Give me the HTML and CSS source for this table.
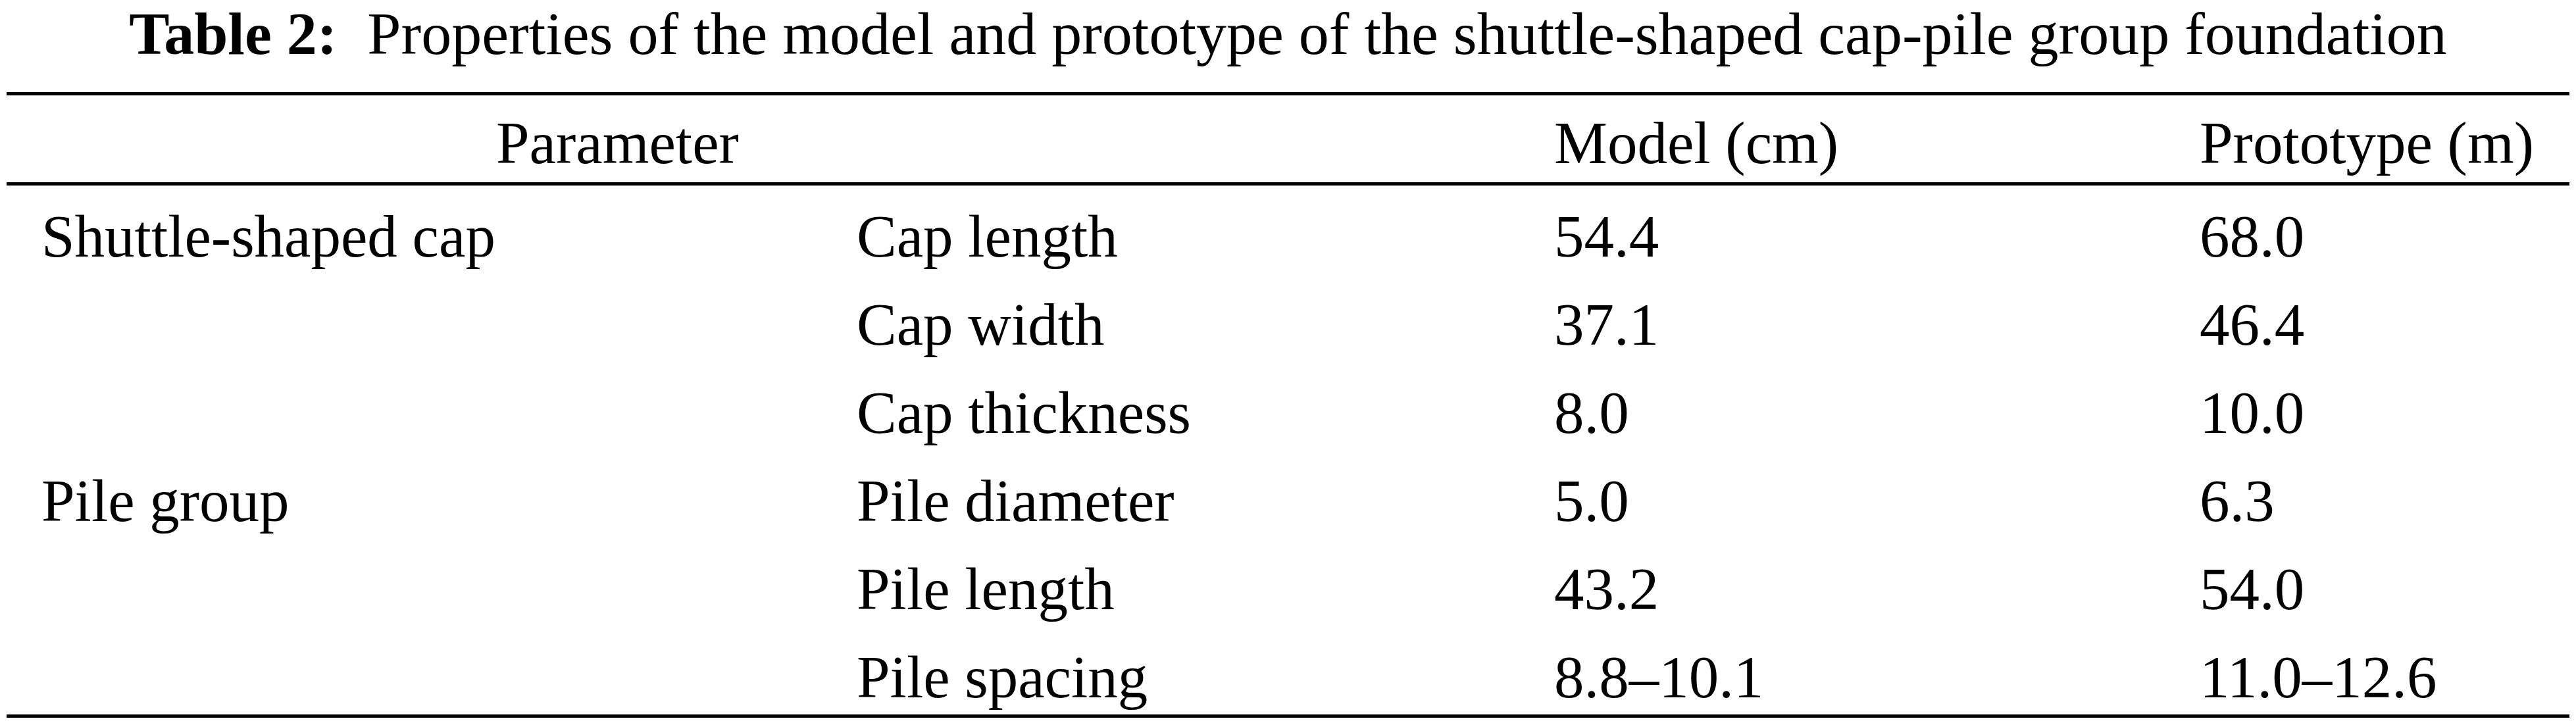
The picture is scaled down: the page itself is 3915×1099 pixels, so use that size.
FILE: index.html
```html
<!DOCTYPE html>
<html lang="en">
<head>
  <meta charset="UTF-8">
  <meta name="viewport" content="width=device-width, initial-scale=1.0">
  <link rel="stylesheet" href="styles.css">
  <title>Table 2</title>
</head>
<body>

  <div class="table-wrap">
    <p class="caption"><span class="caption-label">Table 2:</span>Properties of the model and prototype of the shuttle-shaped cap-pile group foundation</p>

    <table class="props-table">
      <colgroup>
        <col class="col-group">
        <col class="col-item">
        <col class="col-model">
        <col class="col-proto">
      </colgroup>
      <thead>
        <tr>
          <th colspan="2" class="param-head">Parameter</th>
          <th>Model (cm)</th>
          <th>Prototype (m)</th>
        </tr>
      </thead>
      <tbody>
        <tr>
          <td class="group-name">Shuttle-shaped cap</td>
          <td>Cap length</td>
          <td>54.4</td>
          <td>68.0</td>
        </tr>
        <tr>
          <td class="group-name"></td>
          <td>Cap width</td>
          <td>37.1</td>
          <td>46.4</td>
        </tr>
        <tr>
          <td class="group-name"></td>
          <td>Cap thickness</td>
          <td>8.0</td>
          <td>10.0</td>
        </tr>
        <tr>
          <td class="group-name">Pile group</td>
          <td>Pile diameter</td>
          <td>5.0</td>
          <td>6.3</td>
        </tr>
        <tr>
          <td class="group-name"></td>
          <td>Pile length</td>
          <td>43.2</td>
          <td>54.0</td>
        </tr>
        <tr class="last-row">
          <td class="group-name"></td>
          <td>Pile spacing</td>
          <td>8.8&ndash;10.1</td>
          <td>11.0&ndash;12.6</td>
        </tr>
      </tbody>
    </table>
  </div>

</body>
</html>
```

FILE: styles.css
```css
body {
  font-family: "Liberation Serif", "Times New Roman", serif;
  background-color: #ffffff;
  color: #000000;
  margin: 0;
  padding: 0;
}

.table-wrap {
  padding: 0 10px;
}

.caption {
  margin: 0 0 38px 0;
  font-size: 92px;
  line-height: 102px;
  text-align: center;
  white-space: nowrap;
}

.caption-label {
  font-weight: bold;
  margin-right: 0.5em;
}

.props-table {
  width: 100%;
  table-layout: fixed;
  border-collapse: separate;
  border-spacing: 0;
  font-size: 91px;
  line-height: 90px;
}

.col-group {
  width: 1292px;
}

.col-item {
  width: 1060px;
}

.col-model {
  width: 981px;
}

.props-table th,
.props-table td {
  text-align: left;
  font-weight: normal;
  white-space: nowrap;
  padding: 33px 0 11px 0;
}

.props-table th {
  border-top: 5px solid #000;
  border-bottom: 5px solid #000;
  padding-top: 28px;
  padding-bottom: 14px;
}

.props-table .param-head {
  padding-left: 744px;
}

.props-table .group-name {
  padding-left: 53px;
}

.last-row td {
  border-bottom: 5px solid #000;
}
```
